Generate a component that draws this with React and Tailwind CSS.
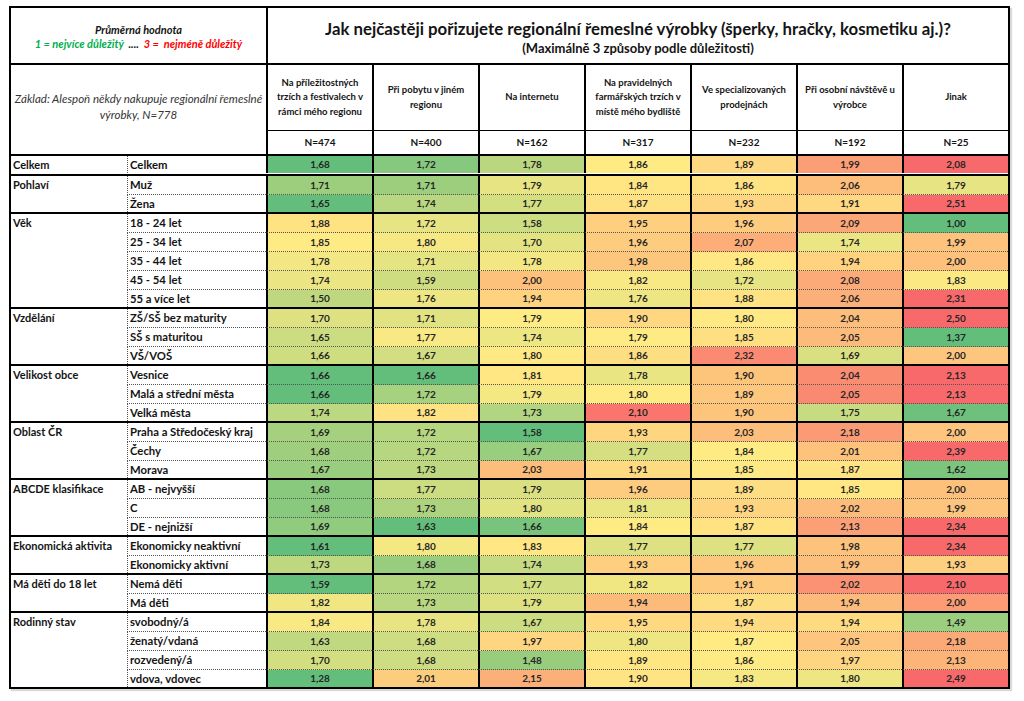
const columns = [
  ["Na příležitostných", "trzích a festivalech v", "rámci mého regionu"],
  ["Při pobytu v jiném", "regionu"],
  ["Na internetu"],
  ["Na pravidelných", "farmářských trzích v", "místě mého bydliště"],
  ["Ve specializovaných", "prodejnách"],
  ["Při osobní návštěvě u", "výrobce"],
  ["Jinak"],
];

const counts = [474, 400, 162, 317, 232, 192, 25];

const groups = [
  { name: "Celkem", rows: [["Celkem", [1.68, 1.72, 1.78, 1.86, 1.89, 1.99, 2.08]]] },
  {
    name: "Pohlaví",
    rows: [
      ["Muž", [1.71, 1.71, 1.79, 1.84, 1.86, 2.06, 1.79]],
      ["Žena", [1.65, 1.74, 1.77, 1.87, 1.93, 1.91, 2.51]],
    ],
  },
  {
    name: "Věk",
    rows: [
      ["18 - 24 let", [1.88, 1.72, 1.58, 1.95, 1.96, 2.09, 1.0]],
      ["25 - 34 let", [1.85, 1.8, 1.7, 1.96, 2.07, 1.74, 1.99]],
      ["35 - 44 let", [1.78, 1.71, 1.78, 1.98, 1.86, 1.94, 2.0]],
      ["45 - 54 let", [1.74, 1.59, 2.0, 1.82, 1.72, 2.08, 1.83]],
      ["55 a více let", [1.5, 1.76, 1.94, 1.76, 1.88, 2.06, 2.31]],
    ],
  },
  {
    name: "Vzdělání",
    rows: [
      ["ZŠ/SŠ bez maturity", [1.7, 1.71, 1.79, 1.9, 1.8, 2.04, 2.5]],
      ["SŠ s maturitou", [1.65, 1.77, 1.74, 1.79, 1.85, 2.05, 1.37]],
      ["VŠ/VOŠ", [1.66, 1.67, 1.8, 1.86, 2.32, 1.69, 2.0]],
    ],
  },
  {
    name: "Velikost obce",
    rows: [
      ["Vesnice", [1.66, 1.66, 1.81, 1.78, 1.9, 2.04, 2.13]],
      ["Malá a střední města", [1.66, 1.72, 1.79, 1.8, 1.89, 2.05, 2.13]],
      ["Velká města", [1.74, 1.82, 1.73, 2.1, 1.9, 1.75, 1.67]],
    ],
  },
  {
    name: "Oblast ČR",
    rows: [
      ["Praha a Středočeský kraj", [1.69, 1.72, 1.58, 1.93, 2.03, 2.18, 2.0]],
      ["Čechy", [1.68, 1.72, 1.67, 1.77, 1.84, 2.01, 2.39]],
      ["Morava", [1.67, 1.73, 2.03, 1.91, 1.85, 1.87, 1.62]],
    ],
  },
  {
    name: "ABCDE klasifikace",
    rows: [
      ["AB - nejvyšší", [1.68, 1.77, 1.79, 1.96, 1.89, 1.85, 2.0]],
      ["C", [1.68, 1.73, 1.8, 1.81, 1.93, 2.02, 1.99]],
      ["DE - nejnižší", [1.69, 1.63, 1.66, 1.84, 1.87, 2.13, 2.34]],
    ],
  },
  {
    name: "Ekonomická aktivita",
    rows: [
      ["Ekonomicky neaktivní", [1.61, 1.8, 1.83, 1.77, 1.77, 1.98, 2.34]],
      ["Ekonomicky aktivní", [1.73, 1.68, 1.74, 1.93, 1.96, 1.99, 1.93]],
    ],
  },
  {
    name: "Má děti do 18 let",
    rows: [
      ["Nemá děti", [1.59, 1.72, 1.77, 1.82, 1.91, 2.02, 2.1]],
      ["Má děti", [1.82, 1.73, 1.79, 1.94, 1.87, 1.94, 2.0]],
    ],
  },
  {
    name: "Rodinný stav",
    rows: [
      ["svobodný/á", [1.84, 1.78, 1.67, 1.95, 1.94, 1.94, 1.49]],
      ["ženatý/vdaná", [1.63, 1.68, 1.97, 1.8, 1.87, 2.05, 2.18]],
      ["rozvedený/á", [1.7, 1.68, 1.48, 1.89, 1.86, 1.97, 2.13]],
      ["vdova, vdovec", [1.28, 2.01, 2.15, 1.9, 1.83, 1.8, 2.49]],
    ],
  },
];

// excel style 3-colour scale: min green, median yellow, max red
const GREEN = [99, 190, 123];
const YELLOW = [255, 235, 132];
const RED = [248, 105, 107];

function mix(a, b, t) {
  return `rgb(${a.map((x, i) => Math.round(x + (b[i] - x) * t)).join(",")})`;
}

function scaleFor(values) {
  const sorted = [...values].sort((a, b) => a - b);
  const rank = 0.5 * (sorted.length - 1);
  const lo = Math.floor(rank);
  const mid = sorted[lo] + (sorted[Math.ceil(rank)] - sorted[lo]) * (rank - lo);
  const min = sorted[0];
  const max = sorted[sorted.length - 1];
  return (v) => {
    if (v <= mid) return mix(GREEN, YELLOW, mid === min ? 1 : (v - min) / (mid - min));
    return mix(YELLOW, RED, max === mid ? 0 : (v - mid) / (max - mid));
  };
}

const fmt = (v) => v.toFixed(2).replace(".", ",");

function Group({ group }) {
  const color = scaleFor(group.rows.flatMap((r) => r[1]));
  return (
    <div className="flex border-b-2 border-black">
      <div className="w-[116px] pl-[2px] text-[11px] font-bold leading-[18px]">{group.name}</div>
      <div className="flex flex-col">
        {group.rows.map(([label, values], i) => {
          const last = i === group.rows.length - 1;
          return (
            <div key={label} className={last ? "flex h-[17px]" : "flex h-[19px]"}>
              <div
                className={
                  last
                    ? "w-[139px] border-l border-l-[#555] pl-[2px] text-[11.3px] font-bold leading-[17px] whitespace-nowrap [border-left-style:dotted]"
                    : "w-[139px] border-l border-b border-l-[#555] border-b-[#555] pl-[2px] text-[11.3px] font-bold leading-[18px] whitespace-nowrap [border-left-style:dotted] [border-bottom-style:dotted]"
                }
              >
                {label}
              </div>
              {values.map((v, j) => (
                <div
                  key={j}
                  className={
                    last
                      ? "flex w-[106px] items-center justify-center border-l-2 border-l-black text-[10px] font-bold text-[#262626]"
                      : "flex w-[106px] items-center justify-center border-l-2 border-b border-l-black border-b-[#555] text-[10px] font-bold text-[#262626] [border-bottom-style:dotted]"
                  }
                  style={{ backgroundColor: color(v) }}
                >
                  {fmt(v)}
                </div>
              ))}
            </div>
          );
        })}
      </div>
    </div>
  );
}

export default function App() {
  return (
    <div className="min-h-screen bg-white pl-[9px] pt-[6px] font-['Lato','Liberation_Sans',sans-serif] text-[#141414]">
      <div className="w-[1001px] border-x-2 border-t-2 border-black shadow-[2px_2px_1px_rgba(0,0,0,0.15)]">
        <div className="flex h-[57px] border-b-2 border-black">
          <div className="flex w-[255px] flex-col items-center justify-center pt-[2px] text-[11px] font-bold italic leading-[14px]">
            <div>Průměrná hodnota</div>
            <div className="whitespace-pre">
              <span className="text-[#00b050]">1 = nejvíce důležitý</span>
              {"  ....  "}
              <span className="text-[#ff0000]">{"3 =  nejméně důležitý"}</span>
            </div>
          </div>
          <div className="flex w-[742px] flex-col items-center justify-center border-l-2 border-black pt-[4px]">
            <div className="text-[16.8px] font-bold leading-[22px]">
              Jak nejčastěji pořizujete regionální řemeslné výrobky (šperky, hračky, kosmetiku aj.)?
            </div>
            <div className="text-[13px] font-bold leading-[17px]">(Maximálně 3 způsoby podle důležitosti)</div>
          </div>
        </div>

        <div className="flex border-b-2 border-black">
          <div className="flex w-[255px] items-center justify-center pb-[6px] text-center text-[11.5px] italic leading-[16px] text-[#333]">
            <p>
              Základ: Alespoň někdy nakupuje regionální řemeslné
              <br />
              výrobky, N=778
            </p>
          </div>
          <div className="flex flex-col">
            <div className="flex h-[66px] border-b border-black">
              {columns.map((lines) => (
                <div
                  key={lines[0]}
                  className="flex w-[106px] flex-col items-center justify-center border-l-2 border-black text-center text-[9.5px] font-bold leading-[14.5px] whitespace-nowrap"
                >
                  {lines.map((l) => (
                    <span key={l}>{l}</span>
                  ))}
                </div>
              ))}
            </div>
            <div className="flex h-[23px]">
              {counts.map((n) => (
                <div key={n} className="flex w-[106px] items-center justify-center border-l-2 border-black text-[10px] font-bold">
                  N={n}
                </div>
              ))}
            </div>
          </div>
        </div>

        {groups.map((g) => (
          <Group key={g.name} group={g} />
        ))}
      </div>
    </div>
  );
}
